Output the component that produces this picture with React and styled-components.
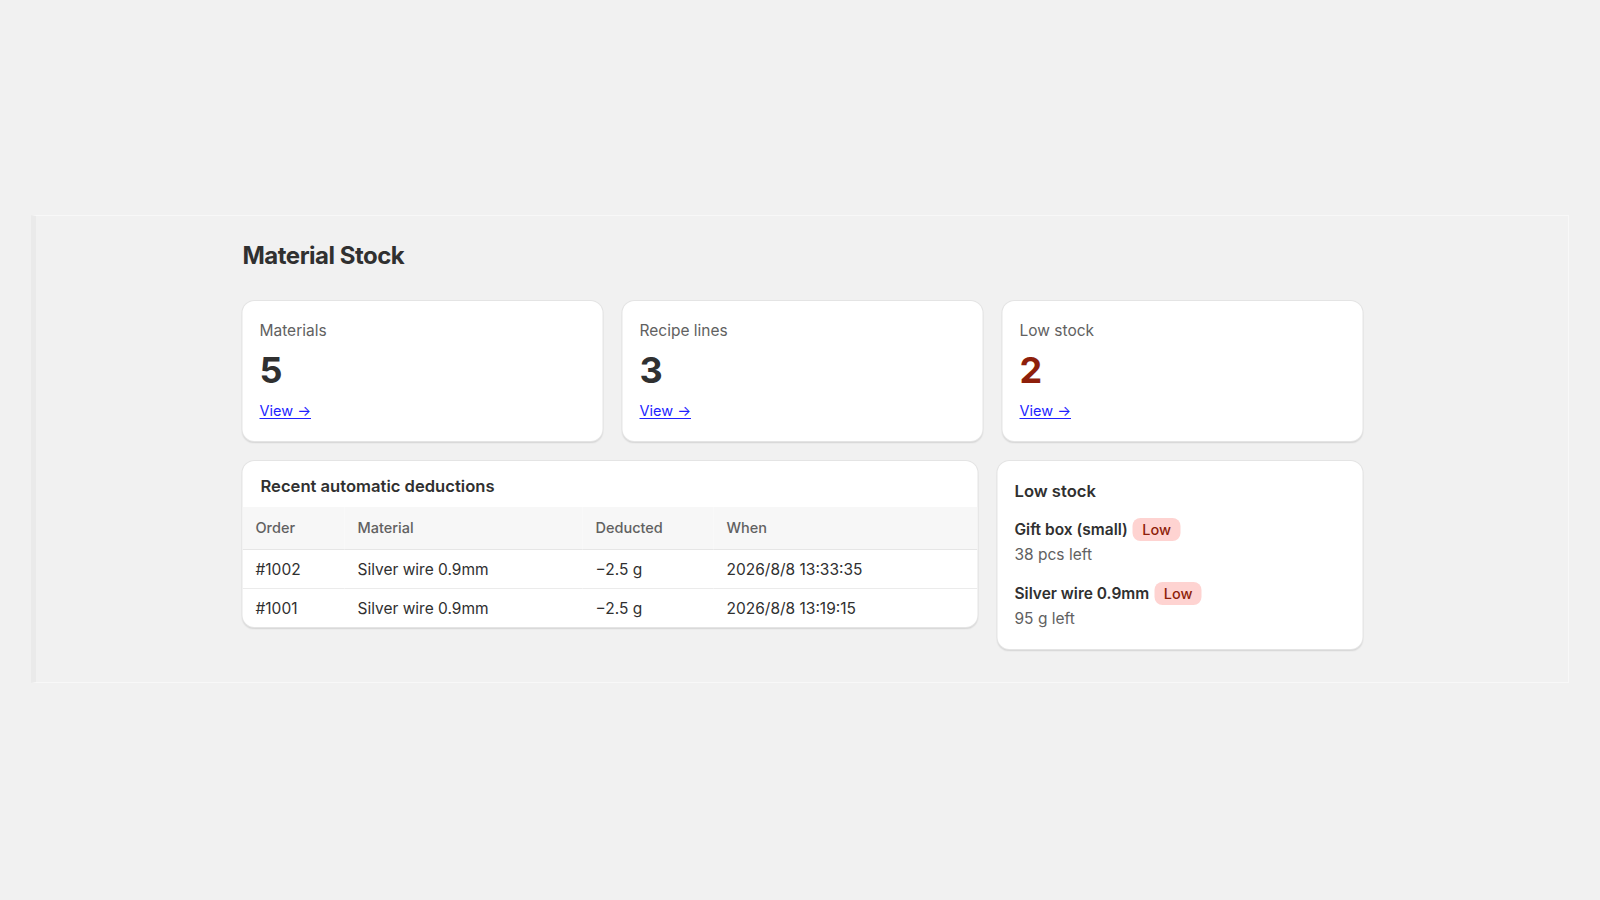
import React from "react";
import styled, { createGlobalStyle } from "styled-components";

const Global = createGlobalStyle`
  html, body { margin: 0; padding: 0; background: #f1f1f1; }
  body {
    font-family: Inter, "Noto Sans", "Liberation Sans", sans-serif;
    color: #303030;
    -webkit-font-smoothing: antialiased;
  }
  * { box-sizing: border-box; }
`;

const Viewport = styled.div`
  width: 1600px;
  height: 900px;
  padding: 215px 0 0 31px;
`;

const Frame = styled.div`
  width: 1538px;
  height: 468px;
  background: #f1f1f1;
  border: 1px solid #f8f8f8;
  border-left: 5px solid #eaeaea;
  padding-top: 24px;
`;

const Page = styled.main`
  width: 1120px;
  margin: 0 auto;
  transform: translateX(0.5px);
`;

const Title = styled.h1`
  margin: 0 0 29px;
  font-size: 24px;
  line-height: 32px;
  font-weight: 700;
  color: #303030;
  letter-spacing: -0.5px;
`;

const StatGrid = styled.div`
  display: grid;
  grid-template-columns: repeat(3, 1fr);
  gap: 20px;
`;

const Card = styled.section`
  background: #ffffff;
  border-radius: 12px;
  box-shadow: 0 0 0 1px #e4e4e4, 0 1.5px 1.5px rgba(0, 0, 0, 0.12);
  overflow: hidden;
`;

const StatCard = styled(Card)`
  height: 140px;
  padding: 20px 17px 0;
`;

const StatLabel = styled.div`
  font-size: 15.5px;
  line-height: 20px;
  color: #616161;
`;

const StatValue = styled.div`
  margin-top: 7px;
  font-size: 36px;
  line-height: 44px;
  font-weight: 700;
  color: ${(p) => (p.$danger ? "#8e1f0b" : "#303030")};
`;

const ViewLink = styled.a`
  display: inline-block;
  margin-top: 9px;
  font-size: 14.5px;
  line-height: 20px;
  color: #1f1fff;
  text-decoration: underline;
  text-underline-offset: 2px;
  cursor: pointer;
`;

const BottomGrid = styled.div`
  display: grid;
  grid-template-columns: 735px 1fr;
  gap: 20px;
  margin-top: 20px;
  align-items: start;
`;

const CardTitle = styled.h2`
  margin: 0;
  font-size: 16.6px;
  line-height: 24px;
  font-weight: 600;
  color: #303030;
`;

const TableHeader = styled.div`
  padding: 13px 18px 9px;
`;

const Table = styled.table`
  width: 100%;
  border-collapse: collapse;
  table-layout: fixed;
`;

const Th = styled.th`
  text-align: left;
  font-size: 14.5px;
  line-height: 20px;
  font-weight: 500;
  color: #616161;
  background: #f7f7f7;
  padding: 11px 13px 11px;
  border-bottom: 1px solid #e6e6e6;
`;

const Td = styled.td`
  font-size: 15.5px;
  line-height: 20px;
  color: #303030;
  padding: 10px 13px 8px;
  border-bottom: ${(p) => (p.$last ? "none" : "1px solid #ebebeb")};
  white-space: nowrap;
`;

const LowCard = styled(Card)`
  padding: 18px 17px 20px;
`;

const LowList = styled.div`
  display: flex;
  flex-direction: column;
  gap: 17px;
  margin-top: 15px;
`;

const LowItem = styled.div`
  display: flex;
  flex-direction: column;
  gap: 4px;
`;

const NameRow = styled.div`
  display: flex;
  align-items: center;
  gap: 5px;
  height: 23px;
`;

const ItemName = styled.span`
  font-size: 15.5px;
  line-height: 20px;
  font-weight: 600;
  color: #303030;
`;

const Badge = styled.span`
  display: inline-flex;
  align-items: center;
  height: 23px;
  padding: 0 9.5px;
  border-radius: 8px;
  background: #fed3d1;
  color: #8e1f0b;
  font-size: 14.5px;
  font-weight: 500;
`;

const ItemMeta = styled.div`
  font-size: 15.5px;
  line-height: 20px;
  color: #616161;
`;

const stats = [
  { label: "Materials", value: "5" },
  { label: "Recipe lines", value: "3" },
  { label: "Low stock", value: "2", danger: true },
];

const deductions = [
  { order: "#1002", material: "Silver wire 0.9mm", deducted: "\u22122.5 g", when: "2026/8/8 13:33:35" },
  { order: "#1001", material: "Silver wire 0.9mm", deducted: "\u22122.5 g", when: "2026/8/8 13:19:15" },
];

const lowStock = [
  { name: "Gift box (small)", left: "38 pcs left" },
  { name: "Silver wire 0.9mm", left: "95 g left" },
];

export default function App() {
  return (
    <>
      <Global />
      <Viewport>
        <Frame>
          <Page>
            <Title>Material Stock</Title>
            <StatGrid>
              {stats.map((s) => (
                <StatCard key={s.label}>
                  <StatLabel>{s.label}</StatLabel>
                  <StatValue $danger={s.danger}>{s.value}</StatValue>
                  <ViewLink>View →</ViewLink>
                </StatCard>
              ))}
            </StatGrid>
            <BottomGrid>
              <Card>
                <TableHeader>
                  <CardTitle>Recent automatic deductions</CardTitle>
                </TableHeader>
                <Table>
                  <colgroup>
                    <col style={{ width: 102 }} />
                    <col style={{ width: 238 }} />
                    <col style={{ width: 131 }} />
                    <col />
                  </colgroup>
                  <thead>
                    <tr>
                      <Th>Order</Th>
                      <Th>Material</Th>
                      <Th>Deducted</Th>
                      <Th>When</Th>
                    </tr>
                  </thead>
                  <tbody>
                    {deductions.map((d, i) => (
                      <tr key={d.order}>
                        <Td $last={i === deductions.length - 1}>{d.order}</Td>
                        <Td $last={i === deductions.length - 1}>{d.material}</Td>
                        <Td $last={i === deductions.length - 1}>{d.deducted}</Td>
                        <Td $last={i === deductions.length - 1}>{d.when}</Td>
                      </tr>
                    ))}
                  </tbody>
                </Table>
              </Card>
              <LowCard>
                <CardTitle>Low stock</CardTitle>
                <LowList>
                  {lowStock.map((item) => (
                    <LowItem key={item.name}>
                      <NameRow>
                        <ItemName>{item.name}</ItemName>
                        <Badge>Low</Badge>
                      </NameRow>
                      <ItemMeta>{item.left}</ItemMeta>
                    </LowItem>
                  ))}
                </LowList>
              </LowCard>
            </BottomGrid>
          </Page>
        </Frame>
      </Viewport>
    </>
  );
}
